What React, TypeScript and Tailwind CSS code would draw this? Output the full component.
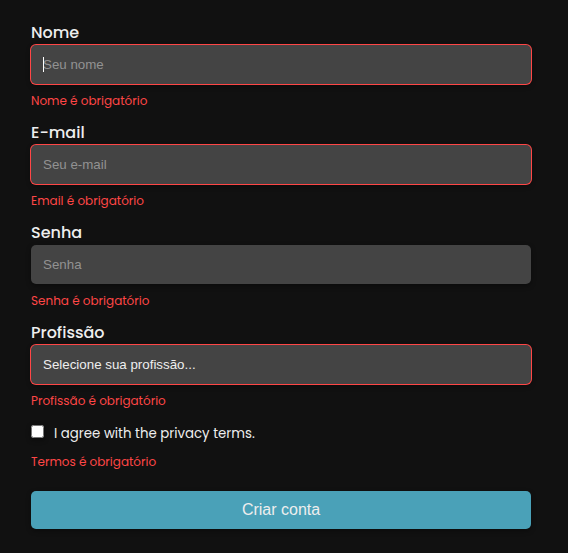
import { useState } from "react";
import type { ReactNode } from "react";

const control =
  "block h-[39px] w-full appearance-none rounded-[5px] bg-[#444] px-3 font-['Liberation_Sans',Arial,sans-serif] [font-size:revert] text-[#eee] shadow-[0_2px_5px_rgba(0,0,0,0.4)] outline-none placeholder:text-[#929292]";
const invalid = "ring-1 ring-[#ff4646]";

function ErrorText({ id, children }: { id: string; children: ReactNode }) {
  return (
    <p id={id} className="text-[12px] leading-[18px] text-[#ff4646]">
      {children}
    </p>
  );
}

interface FieldProps {
  id: string;
  label: string;
  error: string;
  children: ReactNode;
}

function Field({ id, label, error, children }: FieldProps) {
  return (
    <div className="flex flex-col">
      <label htmlFor={id} className="self-start text-base leading-6 font-medium text-[#eee]">
        {label}
      </label>
      {children}
      <div className="mt-2">
        <ErrorText id={`${id}-error`}>{error}</ErrorText>
      </div>
    </div>
  );
}

export default function App() {
  const [name, setName] = useState("");

  return (
    <main className="min-h-screen bg-[#111] pt-[21px] pr-[37px] pb-6 pl-[31px] font-['Poppins','Inter',sans-serif]">
      <form className="flex flex-col gap-[11px]" noValidate onSubmit={(e) => e.preventDefault()}>
        <Field id="name" label="Nome" error="Nome é obrigatório">
          <div className="relative">
            <input
              id="name"
              type="text"
              placeholder="Seu nome"
              value={name}
              onChange={(e) => setName(e.target.value)}
              aria-describedby="name-error"
              className={`${control} ${invalid} caret-transparent`}
            />
            {name === "" && <span className="absolute top-3 left-3 h-[15px] w-px bg-white" />}
          </div>
        </Field>
        <Field id="email" label="E-mail" error="Email é obrigatório">
          <input
            id="email"
            type="email"
            placeholder="Seu e-mail"
            aria-describedby="email-error"
            className={`${control} ${invalid}`}
          />
        </Field>
        <Field id="password" label="Senha" error="Senha é obrigatório">
          <input
            id="password"
            type="password"
            placeholder="Senha"
            aria-describedby="password-error"
            className={control}
          />
        </Field>
        <Field id="job" label="Profissão" error="Profissão é obrigatório">
          <select id="job" defaultValue="" aria-describedby="job-error" className={`${control} ${invalid}`}>
            <option value="">Selecione sua profissão...</option>
          </select>
        </Field>
        <div>
          <div className="flex items-start gap-[10px]">
            <input
              id="terms"
              type="checkbox"
              aria-describedby="terms-error"
              className="mt-1 size-[13px] shadow-[0_2px_5px_rgba(0,0,0,0.4)]"
            />
            <label htmlFor="terms" className="[font-size:smaller] leading-[26px] font-normal text-[#eee]">
              I agree with the privacy terms.
            </label>
          </div>
          <div className="mt-1.5">
            <ErrorText id="terms-error">Termos é obrigatório</ErrorText>
          </div>
        </div>
        <button
          type="submit"
          className="mt-[9px] h-[38px] w-full rounded-[5px] bg-[#4aa1b8] font-['Liberation_Sans',Arial,sans-serif] text-base text-[#eee] shadow-[0_2px_5px_rgba(0,0,0,0.4)]"
        >
          Criar conta
        </button>
      </form>
    </main>
  );
}
